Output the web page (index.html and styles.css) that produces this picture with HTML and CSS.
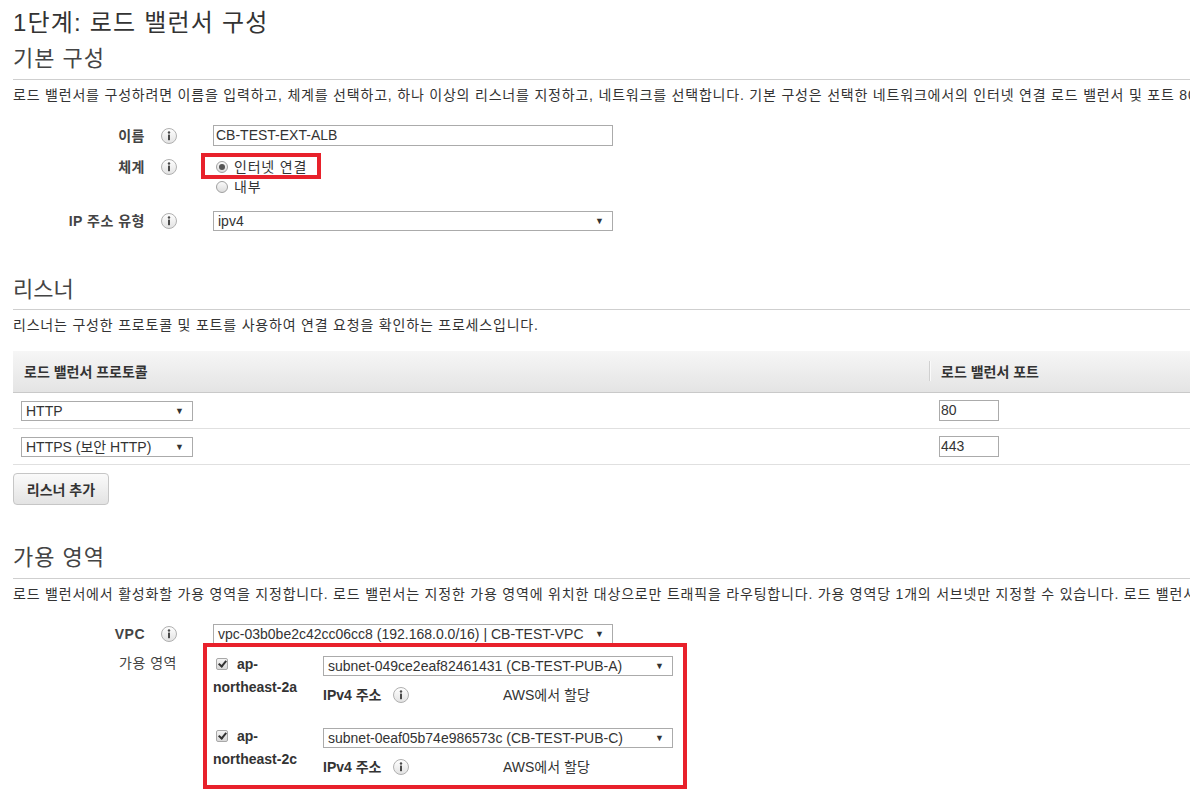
FILE: index.html
```html
<!DOCTYPE html>
<html lang="ko">
<head>
    <meta charset="UTF-8">
    <title>1단계: 로드 밸런서 구성</title>
    <link rel="stylesheet" href="styles.css">
</head>
<body>
    <div class="page">
        <h1 class="step-title">1단계: 로드 밸런서 구성</h1>

        <!-- 기본 구성 -->
        <h2 class="section-title first">기본 구성</h2>
        <p class="section-desc">로드 밸런서를 구성하려면 이름을 입력하고, 체계를 선택하고, 하나 이상의 리스너를 지정하고, 네트워크를 선택합니다. 기본 구성은 선택한 네트워크에서의 인터넷 연결 로드 밸런서 및 포트 80에서 HTTP 트래픽을 수신하는 리스너입니다.</p>

        <div class="form">
            <div class="field field-name">
                <div class="field-label">이름 <span class="info"><svg viewBox="0 0 16 16" width="16" height="16"><defs><linearGradient id="ig" x1="0" y1="0" x2="0" y2="1"><stop offset="0" stop-color="#ffffff"/><stop offset="1" stop-color="#e2e2e2"/></linearGradient></defs><circle cx="8" cy="8" r="7.5" fill="url(#ig)" stroke="#b0b0b0"/><circle cx="8" cy="4.5" r="1.2" fill="#4a4a4a"/><rect x="7" y="6.6" width="2" height="5.6" fill="#4a4a4a"/></svg></span></div>
                <div class="field-control">
                    <div class="text-input wide">CB-TEST-EXT-ALB</div>
                </div>
            </div>

            <div class="field field-scheme">
                <div class="field-label">체계 <span class="info"><svg viewBox="0 0 16 16" width="16" height="16"><circle cx="8" cy="8" r="7.5" fill="url(#ig)" stroke="#b0b0b0"/><circle cx="8" cy="4.5" r="1.2" fill="#4a4a4a"/><rect x="7" y="6.6" width="2" height="5.6" fill="#4a4a4a"/></svg></span></div>
                <div class="field-control">
                    <div class="radio-list">
                        <span class="radio-option marked"><span class="radio checked"></span>인터넷 연결</span>
                        <span class="radio-option"><span class="radio"></span>내부</span>
                    </div>
                </div>
            </div>

            <div class="field field-ip">
                <div class="field-label">IP 주소 유형 <span class="info"><svg viewBox="0 0 16 16" width="16" height="16"><circle cx="8" cy="8" r="7.5" fill="url(#ig)" stroke="#b0b0b0"/><circle cx="8" cy="4.5" r="1.2" fill="#4a4a4a"/><rect x="7" y="6.6" width="2" height="5.6" fill="#4a4a4a"/></svg></span></div>
                <div class="field-control">
                    <div class="select wide"><span>ipv4</span><span class="arrow">▼</span></div>
                </div>
            </div>
        </div>

        <!-- 리스너 -->
        <h2 class="section-title listeners">리스너</h2>
        <p class="section-desc">리스너는 구성한 프로토콜 및 포트를 사용하여 연결 요청을 확인하는 프로세스입니다.</p>

        <div class="listener-table">
            <div class="lt-head">
                <div class="lt-cell">로드 밸런서 프로토콜</div>
                <div class="lt-cell sep">로드 밸런서 포트</div>
            </div>
            <div class="lt-row">
                <div class="lt-cell"><div class="select proto"><span>HTTP</span><span class="arrow">▼</span></div></div>
                <div class="lt-cell port-cell"><div class="text-input port">80</div></div>
            </div>
            <div class="lt-row">
                <div class="lt-cell"><div class="select proto"><span>HTTPS (보안 HTTP)</span><span class="arrow">▼</span></div></div>
                <div class="lt-cell port-cell"><div class="text-input port">443</div></div>
            </div>
        </div>

        <button class="btn">리스너 추가</button>

        <!-- 가용 영역 -->
        <h2 class="section-title zones">가용 영역</h2>
        <p class="section-desc">로드 밸런서에서 활성화할 가용 영역을 지정합니다. 로드 밸런서는 지정한 가용 영역에 위치한 대상으로만 트래픽을 라우팅합니다. 가용 영역당 1개의 서브넷만 지정할 수 있습니다. 로드 밸런서의 가용성을 높이려면 2개 이상의 가용 영역에서 서브넷을 지정해야 합니다.</p>

        <div class="form zone-form">
            <div class="field field-vpc">
                <div class="field-label">VPC <span class="info"><svg viewBox="0 0 16 16" width="16" height="16"><circle cx="8" cy="8" r="7.5" fill="url(#ig)" stroke="#b0b0b0"/><circle cx="8" cy="4.5" r="1.2" fill="#4a4a4a"/><rect x="7" y="6.6" width="2" height="5.6" fill="#4a4a4a"/></svg></span></div>
                <div class="field-control">
                    <div class="select wide"><span>vpc-03b0be2c42cc06cc8 (192.168.0.0/16) | CB-TEST-VPC</span><span class="arrow">▼</span></div>
                </div>
            </div>

            <div class="field field-az">
                <div class="field-label plain">가용 영역</div>
                <div class="field-control">
                    <div class="az-list">
                        <div class="az">
                            <div class="az-name"><span class="checkbox"></span>ap-northeast-2a</div>
                            <div class="az-detail">
                                <div class="select subnet"><span>subnet-049ce2eaf82461431 (CB-TEST-PUB-A)</span><span class="arrow">▼</span></div>
                                <div class="az-ip">
                                    <div class="az-ip-label">IPv4 주소 <span class="info"><svg viewBox="0 0 16 16" width="16" height="16"><circle cx="8" cy="8" r="7.5" fill="url(#ig)" stroke="#b0b0b0"/><circle cx="8" cy="4.5" r="1.2" fill="#4a4a4a"/><rect x="7" y="6.6" width="2" height="5.6" fill="#4a4a4a"/></svg></span></div>
                                    <div class="az-ip-value">AWS에서 할당</div>
                                </div>
                            </div>
                        </div>
                        <div class="az">
                            <div class="az-name"><span class="checkbox"></span>ap-northeast-2c</div>
                            <div class="az-detail">
                                <div class="select subnet"><span>subnet-0eaf05b74e986573c (CB-TEST-PUB-C)</span><span class="arrow">▼</span></div>
                                <div class="az-ip">
                                    <div class="az-ip-label">IPv4 주소 <span class="info"><svg viewBox="0 0 16 16" width="16" height="16"><circle cx="8" cy="8" r="7.5" fill="url(#ig)" stroke="#b0b0b0"/><circle cx="8" cy="4.5" r="1.2" fill="#4a4a4a"/><rect x="7" y="6.6" width="2" height="5.6" fill="#4a4a4a"/></svg></span></div>
                                    <div class="az-ip-value">AWS에서 할당</div>
                                </div>
                            </div>
                        </div>
                    </div>
                </div>
            </div>
        </div>
    </div>
</body>
</html>
```

FILE: styles.css
```css
* {
    margin: 0;
    padding: 0;
    box-sizing: border-box;
}

body {
    font-family: "Liberation Sans", "Noto Sans CJK KR", sans-serif;
    font-size: 14px;
    line-height: 20px;
    color: #444;
    background: #fff;
    overflow: hidden;
}

.page {
    width: 1500px;
    padding-left: 13px;
}

.step-title {
    font-size: 24px;
    line-height: 30px;
    font-weight: normal;
    color: #333;
    margin-top: 8px;
    letter-spacing: 1.2px;
}

.section-title {
    font-size: 22px;
    line-height: 30px;
    font-weight: normal;
    color: #444;
    padding-bottom: 5px;
    border-bottom: 1px solid #cfcfcf;
    width: 1177px;
    letter-spacing: 1px;
}

.section-title.first {
    margin-top: 6px;
}

.section-title.listeners {
    margin-top: 44px;
    padding-bottom: 4px;
    letter-spacing: 0;
}

.section-title.zones {
    margin-top: 38px;
}

.section-desc {
    margin-top: 5px;
    white-space: nowrap;
    color: #333;
    letter-spacing: 0.8px;
}

/* Form rows */
.form {
    margin-top: 20px;
}

.field {
    display: flex;
    align-items: flex-start;
}

.field-label {
    width: 164px;
    display: flex;
    justify-content: flex-end;
    align-items: center;
    gap: 16px;
    font-weight: bold;
    color: #444;
    flex-shrink: 0;
    letter-spacing: 0.5px;
}

.field-label.plain {
    font-weight: normal;
    padding-top: 10px;
}

.field-control {
    margin-left: 36px;
}

.field-name .field-label {
    padding-top: 1px;
}

.field-name {
    margin-bottom: 11px;
}

.field-scheme {
    margin-bottom: 14px;
}

.info {
    display: flex;
    width: 16px;
    height: 16px;
}

.text-input {
    height: 21px;
    border: 1px solid #ababab;
    background: #fff;
    padding: 0 2px;
    line-height: 19px;
    color: #333;
}

.text-input.wide {
    width: 400px;
}

.text-input.port {
    width: 60px;
    padding-left: 1px;
}

.select {
    height: 20px;
    border: 1px solid #ababab;
    background: #fff;
    display: flex;
    justify-content: space-between;
    align-items: center;
    padding: 0 8px 0 4px;
    line-height: 18px;
    color: #333;
    white-space: nowrap;
}

.select .arrow {
    font-size: 9px;
    color: #333;
    line-height: 18px;
}

.select.wide {
    width: 400px;
}

.select.proto {
    width: 172px;
}

.select.subnet {
    width: 350px;
    margin-top: 3px;
}

/* Radio buttons */
.radio-list {
    display: flex;
    flex-direction: column;
    align-items: flex-start;
}

.radio-option {
    position: relative;
    display: inline-flex;
    align-items: center;
    gap: 6px;
    padding-left: 3px;
    color: #333;
    letter-spacing: 0.8px;
}

.radio {
    width: 12px;
    height: 12px;
    border-radius: 50%;
    border: 1px solid #a0a0a0;
    background: linear-gradient(#fafafa, #dcdcdc);
    display: inline-flex;
    align-items: center;
    justify-content: center;
}

.radio.checked::after {
    content: '';
    width: 6px;
    height: 6px;
    border-radius: 50%;
    background: #555;
}

.radio-option.marked::after {
    content: '';
    position: absolute;
    left: -12px;
    right: -14px;
    top: -4px;
    bottom: -2px;
    border: 4px solid #e8212b;
}

/* Listener table */
.listener-table {
    margin-top: 16px;
    width: 1177px;
}

.lt-head,
.lt-row {
    display: grid;
    grid-template-columns: 916px 1fr;
    align-items: center;
}

.lt-head {
    height: 42px;
    background: linear-gradient(#f6f6f6, #e4e4e4);
    border-bottom: 1px solid #c9c9c9;
    font-weight: bold;
    color: #333;
}

.lt-head .lt-cell {
    padding-left: 11px;
}

.lt-head .lt-cell.sep {
    position: relative;
    padding-left: 12px;
}

.lt-head .lt-cell.sep::before {
    content: '';
    position: absolute;
    left: 0;
    top: -1px;
    height: 20px;
    border-left: 1px solid #d0d0d0;
    box-shadow: 1px 0 0 #fafafa;
}

.lt-row {
    height: 36px;
    border-bottom: 1px solid #e0e0e0;
}

.lt-row .lt-cell {
    padding-left: 8px;
}

.lt-row .port-cell {
    padding-left: 10px;
}

.btn {
    margin-top: 8px;
    width: 96px;
    height: 32px;
    border: 1px solid #c6c6c6;
    border-radius: 4px;
    background: linear-gradient(#fafafa, #e3e3e3);
    font-family: inherit;
    font-size: 14px;
    font-weight: bold;
    color: #333;
    display: block;
}

/* Availability zones */
.zone-form {
    margin-top: 20px;
}

.field-az {
    margin-top: -1px;
}

.az-list {
    margin-left: -10px;
    width: 484px;
    border: 4px solid #e8212b;
    padding: 6px 0 8px 6px;
}

.az {
    display: flex;
    margin-bottom: 20px;
}

.az:last-child {
    margin-bottom: 0;
}

.az-name {
    width: 110px;
    flex-shrink: 0;
    font-weight: bold;
    line-height: 23px;
    color: #333;
}

.checkbox {
    display: inline-block;
    width: 12px;
    height: 12px;
    margin: 0 9px 0 3px;
    border: 1px solid #a8a8a8;
    border-radius: 2px;
    background: linear-gradient(#f4f4f4, #d8d8d8);
    vertical-align: -1px;
    position: relative;
}

.checkbox::after {
    content: '';
    position: absolute;
    left: 3px;
    top: 0;
    width: 3px;
    height: 6px;
    border: solid #333;
    border-width: 0 2px 2px 0;
    transform: rotate(40deg);
}

.az-ip {
    display: flex;
    align-items: center;
    margin-top: 9px;
}

.az-ip-label {
    width: 180px;
    display: flex;
    align-items: center;
    gap: 12px;
    font-weight: bold;
    color: #333;
}

.az-ip-value {
    color: #333;
}
```
